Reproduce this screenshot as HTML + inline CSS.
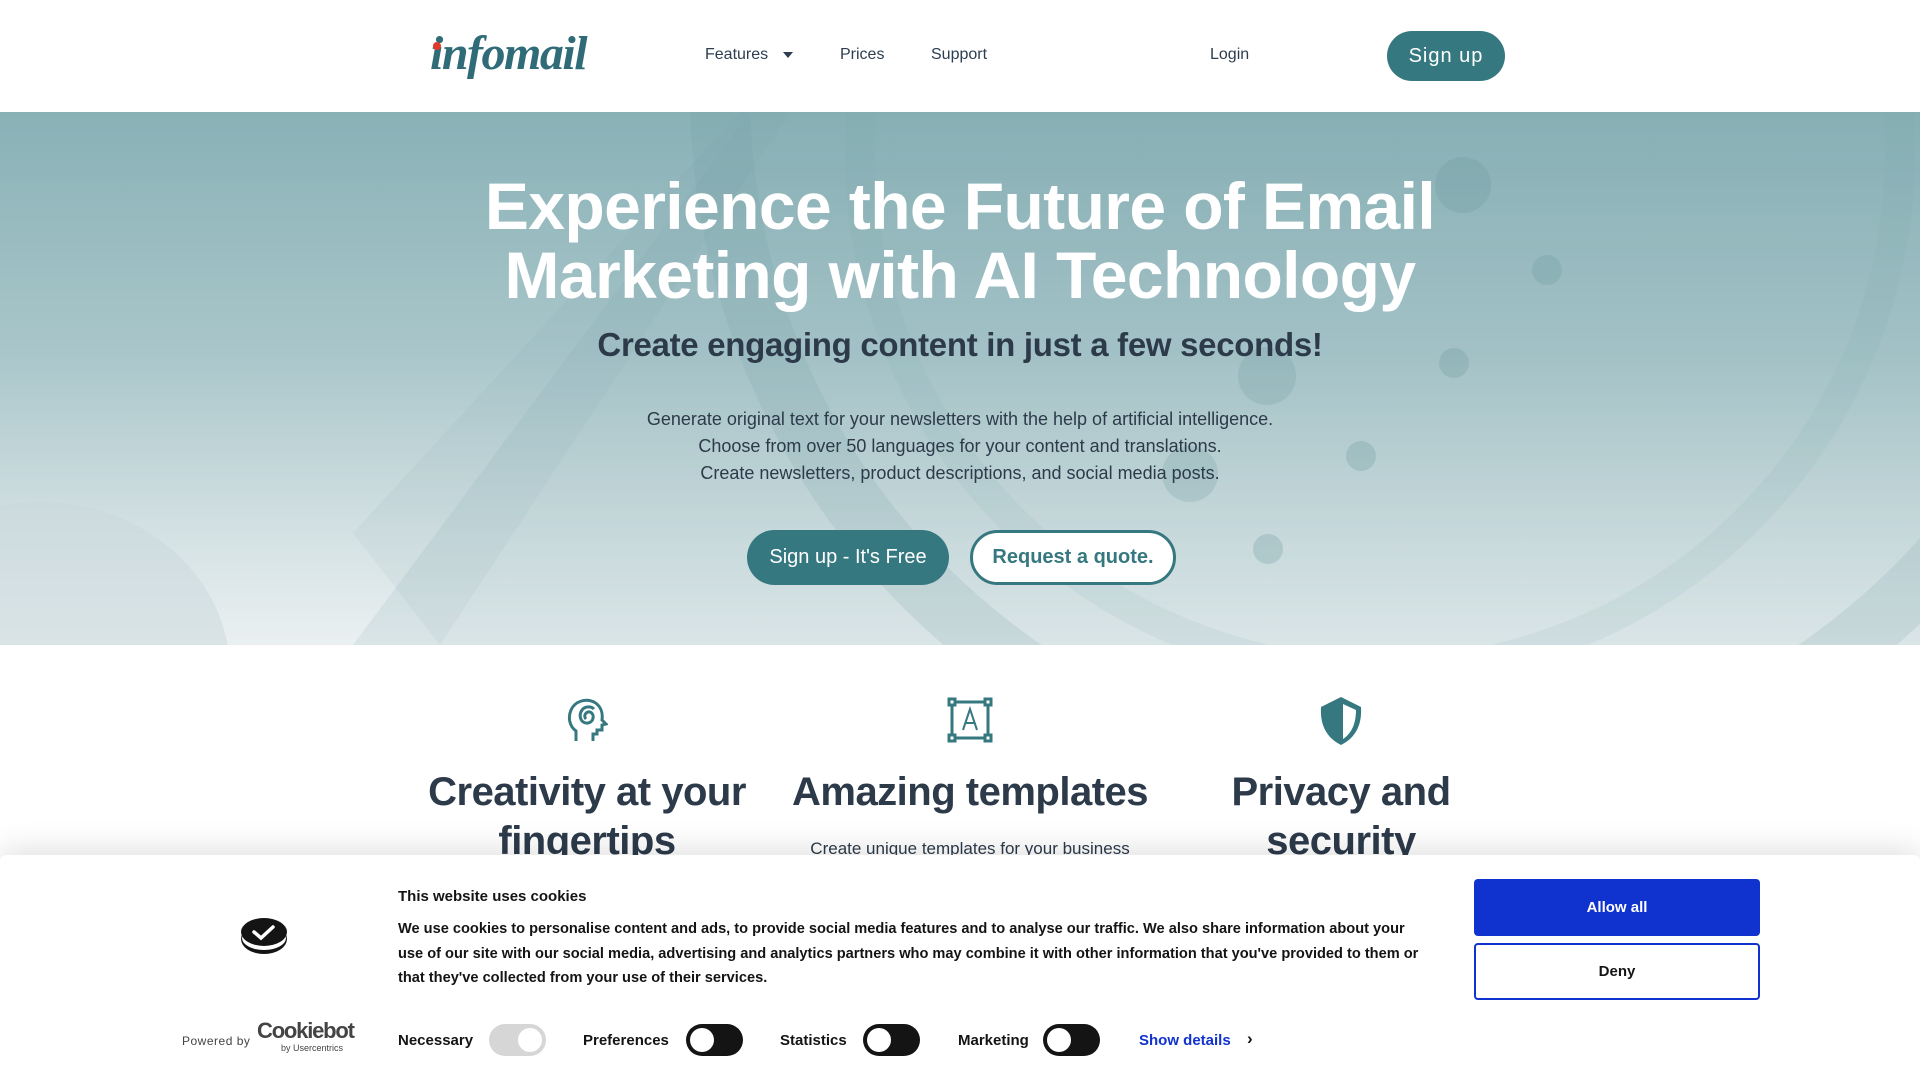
<!DOCTYPE html>
<html><head><meta charset="utf-8"><style>
*{margin:0;padding:0;box-sizing:border-box}
body{width:1920px;height:1080px;overflow:hidden;font-family:"Liberation Sans",Arial,sans-serif;background:#fff;position:relative;color:#2c3e50}
.hdr{position:absolute;top:0;left:0;width:1920px;height:112px;background:#fff}
.logo{position:absolute;left:430px;top:26px;font-family:"Liberation Serif",serif;font-style:italic;font-weight:bold;font-size:48px;color:#2f6c78;letter-spacing:-1.5px}
.logo .dot{position:absolute;left:3px;top:16px;width:8px;height:8px;border-radius:50%;background:#e03a2c}
.nav{position:absolute;top:46px;font-size:16px;color:#2c3e50}
.btn-h{position:absolute;left:1387px;top:31px;width:118px;height:50px;border-radius:25px;background:#367880;color:#fff;font-size:20px;letter-spacing:1px;text-align:center;line-height:50px}
.hero{position:absolute;top:112px;left:0;width:1920px;height:533px;overflow:hidden;background:linear-gradient(180deg,#88b1b6 0%,#a9c6ca 45%,#d5e2e4 80%,#eaf0f1 100%)}
.hero svg{position:absolute;left:0;top:0}
h1{position:absolute;top:60px;left:0;width:1920px;text-align:center;color:#fff;font-size:66px;line-height:69px;letter-spacing:-0.6px;font-weight:bold}
.sub{position:absolute;top:214px;width:1920px;text-align:center;font-size:33px;font-weight:bold;color:#2c3a4a;letter-spacing:-0.3px}
.par{position:absolute;top:294px;width:1920px;text-align:center;font-size:18px;line-height:27px;color:#2c3a4a}
.b1{position:absolute;left:747px;top:418px;width:202px;height:55px;border-radius:28px;background:#367880;color:#fff;font-size:20px;text-align:center;line-height:55px}
.b2{position:absolute;left:970px;top:418px;width:206px;height:55px;border-radius:28px;background:#fff;border:3px solid #367880;color:#367880;font-size:20px;font-weight:bold;text-align:center;line-height:49px}
.feat{position:absolute;text-align:center;color:#2c3a4a}
.feat h2{font-size:40px;line-height:49px;letter-spacing:-0.5px;font-weight:bold}
.ck{position:absolute;left:0;top:855px;width:1920px;height:225px;background:#fff;box-shadow:0 -6px 30px rgba(0,0,0,.12);border-radius:6px 6px 0 0;color:#141414}
.ck .t{position:absolute;left:398px;top:33px;font-size:15px;font-weight:bold}
.ck .body{position:absolute;left:398px;top:62px;width:1022px;font-size:14.6px;line-height:24.5px;font-weight:bold}
.allow{position:absolute;left:1474px;top:24px;width:286px;height:57px;background:#1032cf;color:#fff;font-weight:bold;font-size:15px;text-align:center;line-height:57px;border-radius:4px}
.deny{position:absolute;left:1474px;top:88px;width:286px;height:57px;border:2px solid #1032cf;color:#141414;font-weight:bold;font-size:15px;text-align:center;line-height:53px;border-radius:4px}
.lb{position:absolute;top:177px;font-size:15px;font-weight:bold}
.tg{position:absolute;top:169px;width:57px;height:32px;border-radius:16px;background:#141414}
.tg::after{content:"";position:absolute;left:4px;top:4px;width:24px;height:24px;border-radius:50%;background:#fff}
.tg.off{background:#d6d6d6}
.tg.off::after{left:29px}
</style></head><body>
<div class="hdr">
 <div class="logo"><span class="dot"></span>infomail</div>
 <div class="nav" style="left:705px">Features <span style="display:inline-block;margin-left:10px;border-left:5px solid transparent;border-right:5px solid transparent;border-top:6px solid #2c3e50;vertical-align:middle"></span></div>
 <div class="nav" style="left:840px">Prices</div>
 <div class="nav" style="left:931px">Support</div>
 <div class="nav" style="left:1210px">Login</div>
 <div class="btn-h">Sign up</div>
</div>
<div class="hero">
 <svg width="1920" height="533">
  <polygon points="353,533 750,0 1920,0 1920,533" fill="#7fa8ad" opacity="0.15"/>
  <polygon points="353,421 740,0 790,0 440,533" fill="#6f9ba1" opacity="0.08"/>
  <circle cx="1420" cy="-20" r="700" fill="none" stroke="#6f9aa0" stroke-width="60" opacity="0.16"/>
  <circle cx="1380" cy="40" r="520" fill="none" stroke="#7aa3a8" stroke-width="30" opacity="0.1"/>
  <ellipse cx="40" cy="560" rx="190" ry="170" fill="#c9d8db" opacity="0.5"/>
  <circle cx="1463" cy="73" r="28" fill="#6f9aa0" opacity="0.3"/>
  <circle cx="1547" cy="158" r="15" fill="#6f9aa0" opacity="0.3"/>
  <circle cx="1454" cy="251" r="15" fill="#6f9aa0" opacity="0.3"/>
  <circle cx="1267" cy="264" r="29" fill="#6f9aa0" opacity="0.25"/>
  <circle cx="1361" cy="344" r="15" fill="#6f9aa0" opacity="0.3"/>
  <circle cx="1190" cy="362" r="28" fill="#6f9aa0" opacity="0.25"/>
  <circle cx="1268" cy="437" r="15" fill="#6f9aa0" opacity="0.3"/>
 </svg>
 <h1>Experience the Future of Email<br>Marketing with AI Technology</h1>
 <div class="sub">Create engaging content in just a few seconds!</div>
 <div class="par">Generate original text for your newsletters with the help of artificial intelligence.<br>Choose from over 50 languages for your content and translations.<br>Create newsletters, product descriptions, and social media posts.</div>
 <div class="b1">Sign up - It's Free</div>
 <div class="b2">Request a quote.</div>
</div>
<svg style="position:absolute;left:566px;top:697px" width="42" height="46" viewBox="0 0 42 46" fill="none" stroke="#367880" stroke-width="3">
 <path d="M10 44 V34 C3 29 2 20 5 13 C9 4 20 1 28 5 C35 9 37 16 36 23 L40 27 L36 28 V33 H31 V37 H27 V44"/>
 <path d="M20 22 C17 19 20 14 24 15 C29 17 28 25 22 26 C15 27 12 19 16 13 C19 9 25 9 28 12"/>
</svg>
<svg style="position:absolute;left:947px;top:697px" width="46" height="46" viewBox="0 0 46 46" fill="none" stroke="#367880" stroke-width="3">
 <rect x="2" y="2" width="6" height="6"/><rect x="38" y="2" width="6" height="6"/><rect x="2" y="38" width="6" height="6"/><rect x="38" y="38" width="6" height="6"/>
 <path d="M8 5 H38 M8 41 H38 M5 8 V38 M41 8 V38"/>
 <path d="M16 33 L23 12 L30 33 M18.5 26 H27.5" stroke-width="2"/>
</svg>
<svg style="position:absolute;left:1317px;top:695px" width="48" height="52" viewBox="0 0 48 52">
 <path d="M24 2 L44 12 C45 28 40 42 24 50 C8 42 3 28 4 12 Z" fill="#367880"/>
 <path d="M26 9 L39 15 C39 28 35 38 26 44 Z" fill="#fff"/>
</svg>
<div class="feat" style="left:420px;width:334px;top:768px"><h2>Creativity at your fingertips</h2></div>
<div class="feat" style="left:780px;width:380px;top:768px"><h2>Amazing templates</h2><div style="font-size:17px;margin-top:22px">Create unique templates for your business</div></div>
<div class="feat" style="left:1170px;width:342px;top:768px"><h2>Privacy and security</h2></div>
<div class="ck">
 <svg style="position:absolute;left:240px;top:62px" width="48" height="40" viewBox="0 0 48 40">
  <ellipse cx="24" cy="22" rx="23" ry="15" fill="#141414"/>
  <ellipse cx="24" cy="21" rx="22" ry="12" fill="#fff"/>
  <ellipse cx="24" cy="15" rx="23" ry="14" fill="#141414"/>
  <path d="M14 15 L21 21 L33 10" stroke="#fff" stroke-width="3.5" fill="none" stroke-linecap="round"/>
 </svg>
 <div style="position:absolute;left:182px;top:179px;font-size:12px;color:#444;letter-spacing:.5px">Powered by</div>
 <div style="position:absolute;left:257px;top:163px;font-size:22px;font-weight:bold;color:#444;letter-spacing:-1.2px">Cookiebot</div>
 <div style="position:absolute;left:281px;top:188px;font-size:9px;color:#444">by Usercentrics</div>
 <div class="t">This website uses cookies</div>
 <div class="body">We use cookies to personalise content and ads, to provide social media features and to analyse our traffic. We also share information about your use of our site with our social media, advertising and analytics partners who may combine it with other information that you've provided to them or that they've collected from your use of their services.</div>
 <div class="allow">Allow all</div>
 <div class="deny">Deny</div>
 <div class="lb" style="left:398px">Necessary</div><div class="tg off" style="left:489px"></div>
 <div class="lb" style="left:583px">Preferences</div><div class="tg" style="left:686px"></div>
 <div class="lb" style="left:780px">Statistics</div><div class="tg" style="left:863px"></div>
 <div class="lb" style="left:958px">Marketing</div><div class="tg" style="left:1043px"></div>
 <div class="lb" style="left:1139px;color:#1032cf">Show details</div>
 <div class="lb" style="left:1247px;font-size:17px;top:174px">›</div>
</div>
</body></html>
